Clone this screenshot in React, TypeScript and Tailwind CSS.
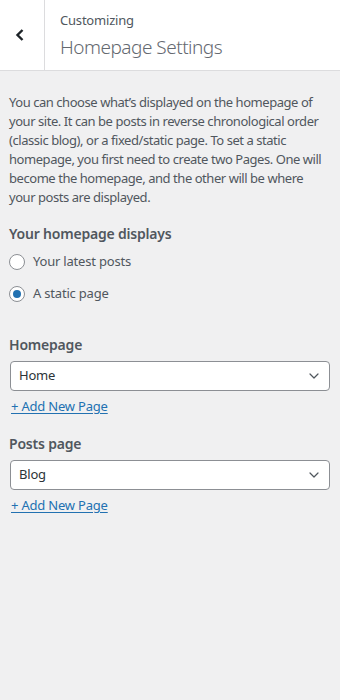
import { ChevronDown } from "lucide-react";

const font = { fontFamily: '"Noto Sans", "Open Sans", sans-serif' };

function PageSelect({ label, value }: { label: string; value: string }) {
  return (
    <div className="flex flex-col">
      <div className="text-[14px] font-semibold text-[#50575e] leading-[20px] tracking-[-0.2px]">{label}</div>
      <div className="mt-[6px] h-[30px] w-[320px] ml-[1px] flex items-center justify-between rounded-[4px] border border-[#8c8f94] bg-white pl-[8px] pr-[7px]">
        <span className="text-[13px] text-[#2c3338] tracking-[-0.2px]">{value}</span>
        <ChevronDown size={16} strokeWidth={1.8} className="text-[#50575e]" />
      </div>
      <a className="mt-[5px] ml-[2px] text-[13px] text-[#2271b1] underline underline-offset-[2px] leading-[20px] w-fit tracking-[-0.2px]">
        + Add New Page
      </a>
    </div>
  );
}

function Radio({ label, checked }: { label: string; checked?: boolean }) {
  return (
    <div className="flex items-center gap-[8px] h-[20px]">
      <span className="w-[16px] h-[16px] rounded-full border border-[#8c8f94] bg-white flex items-center justify-center">
        {checked && <span className="w-[8px] h-[8px] rounded-full bg-[#2271b1]" />}
      </span>
      <span className="text-[13px] text-[#50575e] tracking-[-0.2px]">{label}</span>
    </div>
  );
}

export default function App() {
  return (
    <div className="w-[340px] h-[700px] bg-[#f0f0f1]" style={font}>
      {/* header */}
      <header className="flex h-[71px] bg-white border-b border-[#dcdcde]">
        <div className="w-[45px] border-r border-[#dcdcde] flex items-center justify-center">
          <svg width="10" height="14" viewBox="0 0 10 14" className="ml-[-4px]">
            <path d="M7.5 2 L2.5 7 L7.5 12" fill="none" stroke="#1d2327" strokeWidth="2.4" />
          </svg>
        </div>
        <div className="flex flex-col pl-[15px] pt-[10px]">
          <span className="text-[13px] text-[#50575e] leading-[20px] tracking-[-0.2px]">Customizing</span>
          <span className="text-[19px] font-light text-[#646970] leading-[28px] mt-[3px] tracking-[-0.5px]">
            Homepage Settings
          </span>
        </div>
      </header>

      <div className="px-[9px] pt-[22px]">
        <p className="text-[13px] leading-[19px] text-[#50575e] tracking-[-0.45px] whitespace-nowrap">
          You can choose what’s displayed on the homepage of
          <br />
          your site. It can be posts in reverse chronological order
          <br />
          (classic blog), or a fixed/static page. To set a static
          <br />
          homepage, you first need to create two Pages. One will
          <br />
          become the homepage, and the other will be where
          <br />
          your posts are displayed.
        </p>

        <div className="mt-[17px] text-[14px] font-semibold text-[#50575e] leading-[20px] tracking-[-0.2px]">
          Your homepage displays
        </div>
        <div className="mt-[8px] flex flex-col gap-[12px]">
          <Radio label="Your latest posts" />
          <Radio label="A static page" checked />
        </div>

        <div className="mt-[31px] flex flex-col gap-[18px]">
          <PageSelect label="Homepage" value="Home" />
          <PageSelect label="Posts page" value="Blog" />
        </div>
      </div>
    </div>
  );
}
